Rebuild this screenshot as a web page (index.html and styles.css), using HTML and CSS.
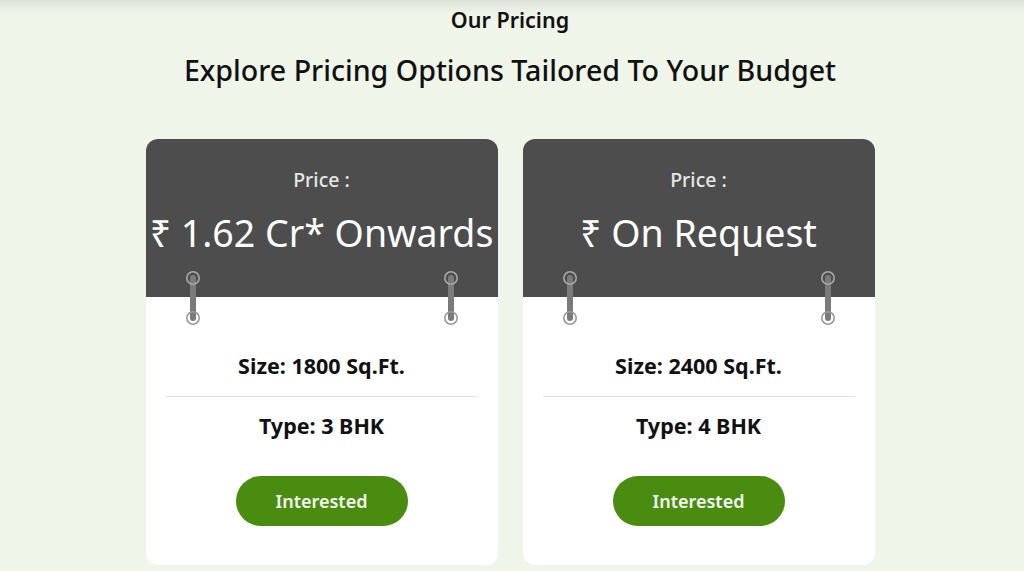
FILE: index.html
```html
<!DOCTYPE html>
<html>
<head>
<meta charset="utf-8">
<link rel="stylesheet" href="styles.css">
</head>
<body>
<section class="pricing">
  <h2 class="eyebrow">Our Pricing</h2>
  <h1 class="title">Explore Pricing Options Tailored To Your Budget</h1>
  <div class="cards">
    <div class="card">
      <div class="card-head">
        <div class="label">Price :</div>
        <div class="price">₹ 1.62 Cr* Onwards</div>
      </div>
      <svg class="ring ring-left" width="16" height="56" viewBox="0 0 16 56"><line x1="8" y1="7" x2="8" y2="47" stroke="#7b7b7b" stroke-width="6" stroke-linecap="round"/><circle cx="8" cy="7" r="6.2" fill="none" stroke="#a8a8a8" stroke-width="1.6"/><circle cx="8" cy="47" r="6.2" fill="none" stroke="#9a9a9a" stroke-width="1.6"/></svg>
      <svg class="ring ring-right" width="16" height="56" viewBox="0 0 16 56"><line x1="8" y1="7" x2="8" y2="47" stroke="#7b7b7b" stroke-width="6" stroke-linecap="round"/><circle cx="8" cy="7" r="6.2" fill="none" stroke="#a8a8a8" stroke-width="1.6"/><circle cx="8" cy="47" r="6.2" fill="none" stroke="#9a9a9a" stroke-width="1.6"/></svg>
      <div class="card-body">
        <div class="row">Size: 1800 Sq.Ft.</div>
        <hr class="divider">
        <div class="row">Type: 3 BHK</div>
        <button class="btn">Interested</button>
      </div>
    </div>
    <div class="card">
      <div class="card-head">
        <div class="label">Price :</div>
        <div class="price">₹ On Request</div>
      </div>
      <svg class="ring ring-left" width="16" height="56" viewBox="0 0 16 56"><line x1="8" y1="7" x2="8" y2="47" stroke="#7b7b7b" stroke-width="6" stroke-linecap="round"/><circle cx="8" cy="7" r="6.2" fill="none" stroke="#a8a8a8" stroke-width="1.6"/><circle cx="8" cy="47" r="6.2" fill="none" stroke="#9a9a9a" stroke-width="1.6"/></svg>
      <svg class="ring ring-right" width="16" height="56" viewBox="0 0 16 56"><line x1="8" y1="7" x2="8" y2="47" stroke="#7b7b7b" stroke-width="6" stroke-linecap="round"/><circle cx="8" cy="7" r="6.2" fill="none" stroke="#a8a8a8" stroke-width="1.6"/><circle cx="8" cy="47" r="6.2" fill="none" stroke="#9a9a9a" stroke-width="1.6"/></svg>
      <div class="card-body">
        <div class="row">Size: 2400 Sq.Ft.</div>
        <hr class="divider">
        <div class="row">Type: 4 BHK</div>
        <button class="btn">Interested</button>
      </div>
    </div>
  </div>
</section>
</body>
</html>
```

FILE: styles.css
```css
* { box-sizing: border-box; }
html, body { height: 100%; }
body {
  margin: 0;
  background: linear-gradient(#dde2d8, #eff5e9 14px) no-repeat, #eff5e9;
  font-family: "Noto Sans", "DejaVu Sans", sans-serif;
  color: #111;
  overflow: hidden;
}
.pricing {
  display: flex;
  flex-direction: column;
  align-items: center;
  padding: 6px 4px 0 0;
}
.eyebrow {
  margin: 0;
  font-size: 21.5px;
  line-height: 28px;
  font-weight: 600;
}
.title {
  margin: 18px 0 0;
  font-size: 28.6px;
  line-height: 36px;
  font-weight: 500;
}
.cards {
  display: flex;
  gap: 25px;
  margin-top: 51px;
}
.card {
  position: relative;
  width: 352px;
  height: 426px;
  background: #fff;
  border-radius: 12px;
  overflow: hidden;
  display: flex;
  flex-direction: column;
}
.card-head {
  height: 158px;
  background: #4d4d4d;
  color: #fff;
  text-align: center;
  padding-top: 29px;
}
.label {
  font-size: 19.5px;
  line-height: 24px;
  font-weight: 500;
  color: #e6e6e6;
}
.price {
  margin-top: 20px;
  font-size: 37.5px;
  line-height: 42px;
  white-space: nowrap;
}
.ring {
  position: absolute;
  top: 132px;
}
.ring-left { left: 39px; }
.ring-right { right: 39px; }
.card-body {
  display: flex;
  flex-direction: column;
  align-items: center;
  padding: 55px 20px 0;
}
.row {
  font-size: 21.5px;
  line-height: 28px;
  font-weight: 700;
}
.divider {
  align-self: stretch;
  border: 0;
  border-top: 1px solid #e3e3e3;
  margin: 16px 0 15px;
}
.btn {
  margin-top: 36px;
  width: 172px;
  height: 50px;
  border: 0;
  border-radius: 25px;
  background: #4a8c0f;
  color: #f4f4f4;
  font-family: inherit;
  font-size: 18px;
  font-weight: 600;
}
```
